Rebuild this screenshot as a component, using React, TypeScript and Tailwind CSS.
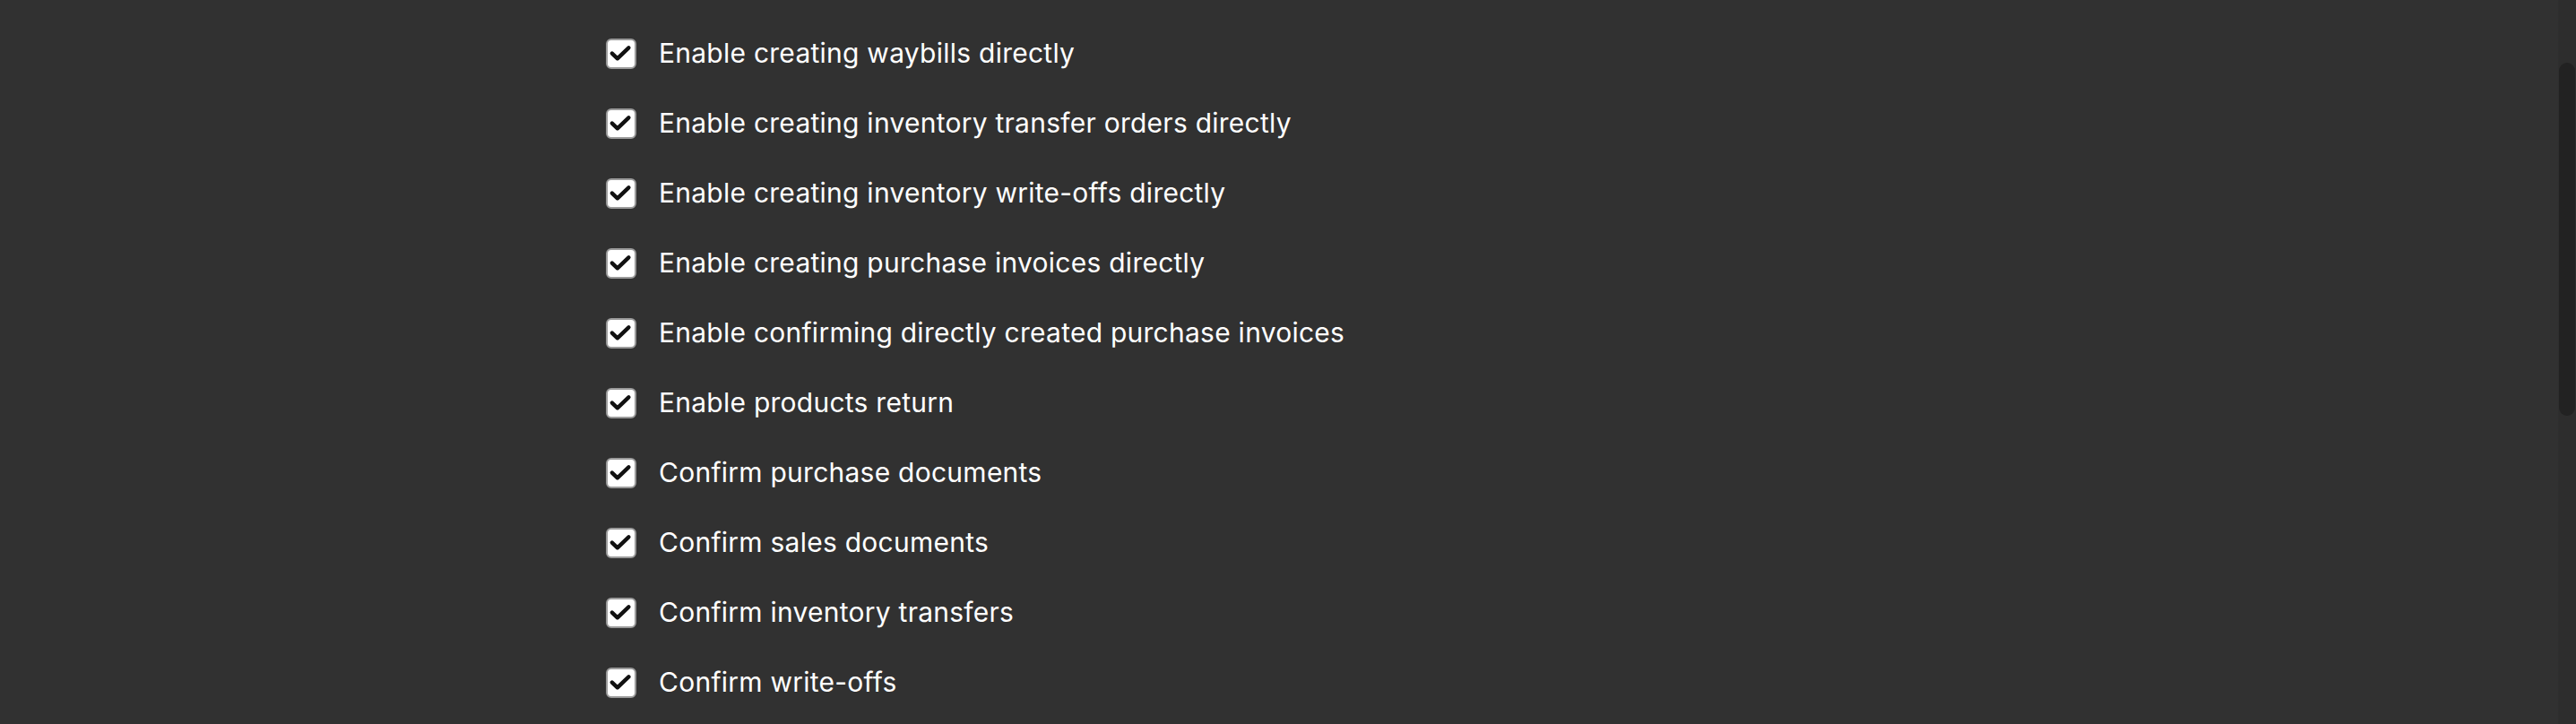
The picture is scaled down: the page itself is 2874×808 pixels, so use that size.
const options = [
  "Enable creating waybills directly",
  "Enable creating inventory transfer orders directly",
  "Enable creating inventory write-offs directly",
  "Enable creating purchase invoices directly",
  "Enable confirming directly created purchase invoices",
  "Enable products return",
  "Confirm purchase documents",
  "Confirm sales documents",
  "Confirm inventory transfers",
  "Confirm write-offs",
];

function CheckBox() {
  return (
    <span className="flex h-[34px] w-[34px] shrink-0 items-center justify-center rounded-[6px] border-2 border-[#9b9b9b] bg-white">
      <svg width="34" height="34" viewBox="0 0 34 34" fill="none">
        <path
          d="M5.5 16.5 L12.3 23 L26.5 9.5"
          stroke="#111"
          strokeWidth="5"
          strokeLinecap="round"
          strokeLinejoin="round"
        />
      </svg>
    </span>
  );
}

export default function App() {
  return (
    <div className="flex h-[808px] w-full overflow-hidden bg-[#313131] font-['Inter','Liberation_Sans',sans-serif] text-white">
      <div className="flex flex-1 flex-col pl-[676px] pt-[21px]">
        {options.map((label) => (
          <label key={label} className="flex h-[78px] cursor-pointer items-center gap-[25px]">
            <CheckBox />
            <span className="-mt-[2px] text-[30px] leading-none tracking-[0.25px]">{label}</span>
          </label>
        ))}
      </div>
      <div className="flex w-[20px] flex-col border-l border-[#2e2e2e] bg-[#2d2d2d] pt-[70px]">
        <div className="h-[394px] w-[18px] rounded-full bg-[#222222]" />
      </div>
    </div>
  );
}
